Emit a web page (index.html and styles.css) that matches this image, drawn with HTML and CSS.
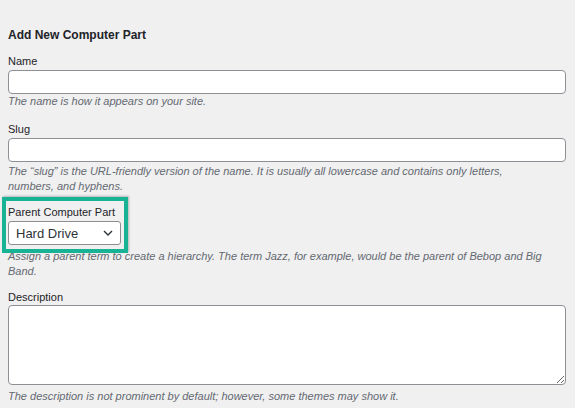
FILE: index.html
```html
<!DOCTYPE html>
<html lang="en">
<head>
    <meta charset="UTF-8">
    <meta name="viewport" content="width=device-width, initial-scale=1.0">
    <title>Add New Computer Part</title>
    <link rel="stylesheet" href="styles.css">
</head>
<body>
    <div class="form-wrap">
        <h2>Add New Computer Part</h2>
        <form id="addtag" method="post">
            <div class="form-field">
                <label for="tag-name">Name</label>
                <input type="text" id="tag-name" name="tag-name">
                <p>The name is how it appears on your site.</p>
            </div>

            <div class="form-field">
                <label for="tag-slug">Slug</label>
                <input type="text" id="tag-slug" name="slug">
                <p>The &ldquo;slug&rdquo; is the URL-friendly version of the name. It is usually all lowercase and contains only letters,<br>numbers, and hyphens.</p>
            </div>

            <div class="form-field parent-field">
                <div class="highlight">
                    <label for="parent">Parent Computer Part</label>
                    <span class="select-wrap">
                        <select id="parent" name="parent">
                            <option>None</option>
                            <option selected>Hard Drive</option>
                            <option>Memory</option>
                            <option>Processor</option>
                        </select>
                        <svg class="chevron" width="12" height="12" viewBox="0 0 12 12"><path d="M2 4l4 4 4-4" fill="none" stroke="#2c3338" stroke-width="1.4"/></svg>
                    </span>
                </div>
                <p>Assign a parent term to create a hierarchy. The term Jazz, for example, would be the parent of Bebop and Big Band.</p>
            </div>

            <div class="form-field description-field">
                <label for="tag-description">Description</label>
                <textarea id="tag-description" name="description" rows="5"></textarea>
                <p>The description is not prominent by default; however, some themes may show it.</p>
            </div>
        </form>
    </div>
</body>
</html>
```

FILE: styles.css
```css
/* Page */
body {
  margin: 0;
  padding: 0 9px 0 8px;
  background-color: #f0f0f1;
  color: #1d2327;
  font-family: "Liberation Sans", Arial, sans-serif;
  font-size: 11px;
}

.form-wrap h2 {
  margin: 27px 0 11px;
  font-size: 12px;
  line-height: 16px;
  font-weight: 600;
}

/* Fields */
.form-field {
  margin-bottom: 13px;
}

.form-field label {
  display: block;
  line-height: 15px;
  margin-bottom: 1px;
}

.form-field p {
  margin: 0;
  color: #646970;
  font-style: italic;
  line-height: 15px;
}

input[type=text], textarea {
  display: block;
  width: 100%;
  box-sizing: border-box;
  border: 1px solid #8c8f94;
  border-radius: 4px;
  background-color: #fff;
  font-family: inherit;
  font-size: 13px;
}

input[type=text] {
  height: 24px;
  padding: 0 6px;
}

#tag-slug {
  margin-bottom: 2px;
}

textarea {
  height: 80px;
  margin-bottom: 4px;
}

.description-field label {
  margin-bottom: 0;
}

/* Highlighted parent select */
.parent-field {
  margin-top: -10px;
  margin-bottom: 11px;
}

.highlight {
  position: relative;
  width: fit-content;
  margin: 0 0 -4px -6px;
  padding: 4px 3px 4px 2px;
  border: 4px solid #17b394;
  box-shadow: 1px -1px 2px rgba(0, 0, 0, 0.25);
}

.select-wrap {
  position: relative;
  display: block;
}

select {
  display: block;
  width: 113px;
  height: 24px;
  padding: 0 24px 0 7px;
  border: 1px solid #8c8f94;
  border-radius: 3px;
  background-color: #fff;
  color: #2c3338;
  font-family: inherit;
  font-size: 13px;
  appearance: none;
  -webkit-appearance: none;
}

.chevron {
  position: absolute;
  right: 7px;
  top: 6px;
  pointer-events: none;
}
```
